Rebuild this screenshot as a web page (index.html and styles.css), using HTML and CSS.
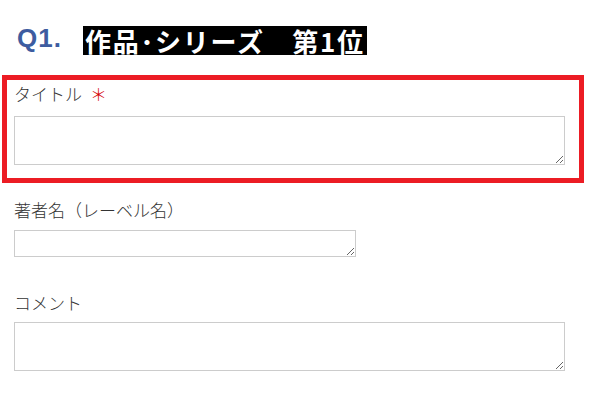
FILE: index.html
```html
<!DOCTYPE html>
<html lang="ja">
<head>
<meta charset="utf-8">
<link rel="stylesheet" href="styles.css">
</head>
<body>
<div class="page">
  <div class="qhead">
    <span class="qnum">Q1.</span>
    <span class="qtitle">作品･シリーズ　第1位</span>
  </div>
  <div class="field field-required">
    <label class="label">タイトル<span class="req">＊</span></label>
    <textarea class="ta ta-wide"></textarea>
  </div>
  <div class="field field-author">
    <label class="label">著者名（レーベル名）</label>
    <textarea class="ta ta-short"></textarea>
  </div>
  <div class="field field-comment">
    <label class="label">コメント</label>
    <textarea class="ta ta-wide"></textarea>
  </div>
</div>
</body>
</html>
```

FILE: styles.css
```css
html, body {
  margin: 0;
  padding: 0;
  background: #ffffff;
}
.page {
  width: 596px;
  font-family: "Noto Sans CJK JP", sans-serif;
}
.qhead {
  display: flex;
  align-items: center;
  height: 29px;
  margin-top: 26px;
  padding-left: 17px;
}
.qnum {
  flex: 0 0 66px;
  font-family: "Liberation Sans", Arial, sans-serif;
  font-weight: bold;
  font-size: 26px;
  letter-spacing: 1px;
  color: #3d5ca0;
  line-height: 29px;
  margin-bottom: 4px;
}
.qtitle {
  background: #000000;
  color: #ffffff;
  font-weight: bold;
  font-size: 26px;
  line-height: 29px;
  height: 29px;
  padding: 0 2px;
  letter-spacing: 1.7px;
}
.field {
  display: flex;
  flex-direction: column;
  align-items: flex-start;
}
.label {
  display: block;
  font-size: 17px;
  line-height: 20px;
  color: #333333;
  font-weight: 300;
}
.req {
  color: #d40000;
  margin-left: 8px;
}
.ta {
  display: block;
  box-sizing: border-box;
  border: 1px solid #cccccc;
  margin: 0;
  padding: 2px;
  background: #ffffff;
  resize: both;
}
.ta-wide {
  width: 551px;
  height: 49px;
}
.ta-short {
  width: 342px;
  height: 27px;
}
.field-required {
  box-sizing: border-box;
  width: 582px;
  margin: 20px 0 0 2px;
  border: 5px solid #ec1c24;
  padding: 4px 14px 13px 7px;
}
.field-required .label {
  margin-bottom: 12px;
}
.field-author {
  margin-top: 17px;
  padding-left: 14px;
}
.field-author .label {
  margin-bottom: 10px;
}
.field-comment {
  margin-top: 36px;
  padding-left: 14px;
}
.field-comment .label {
  margin-bottom: 9px;
}
```
